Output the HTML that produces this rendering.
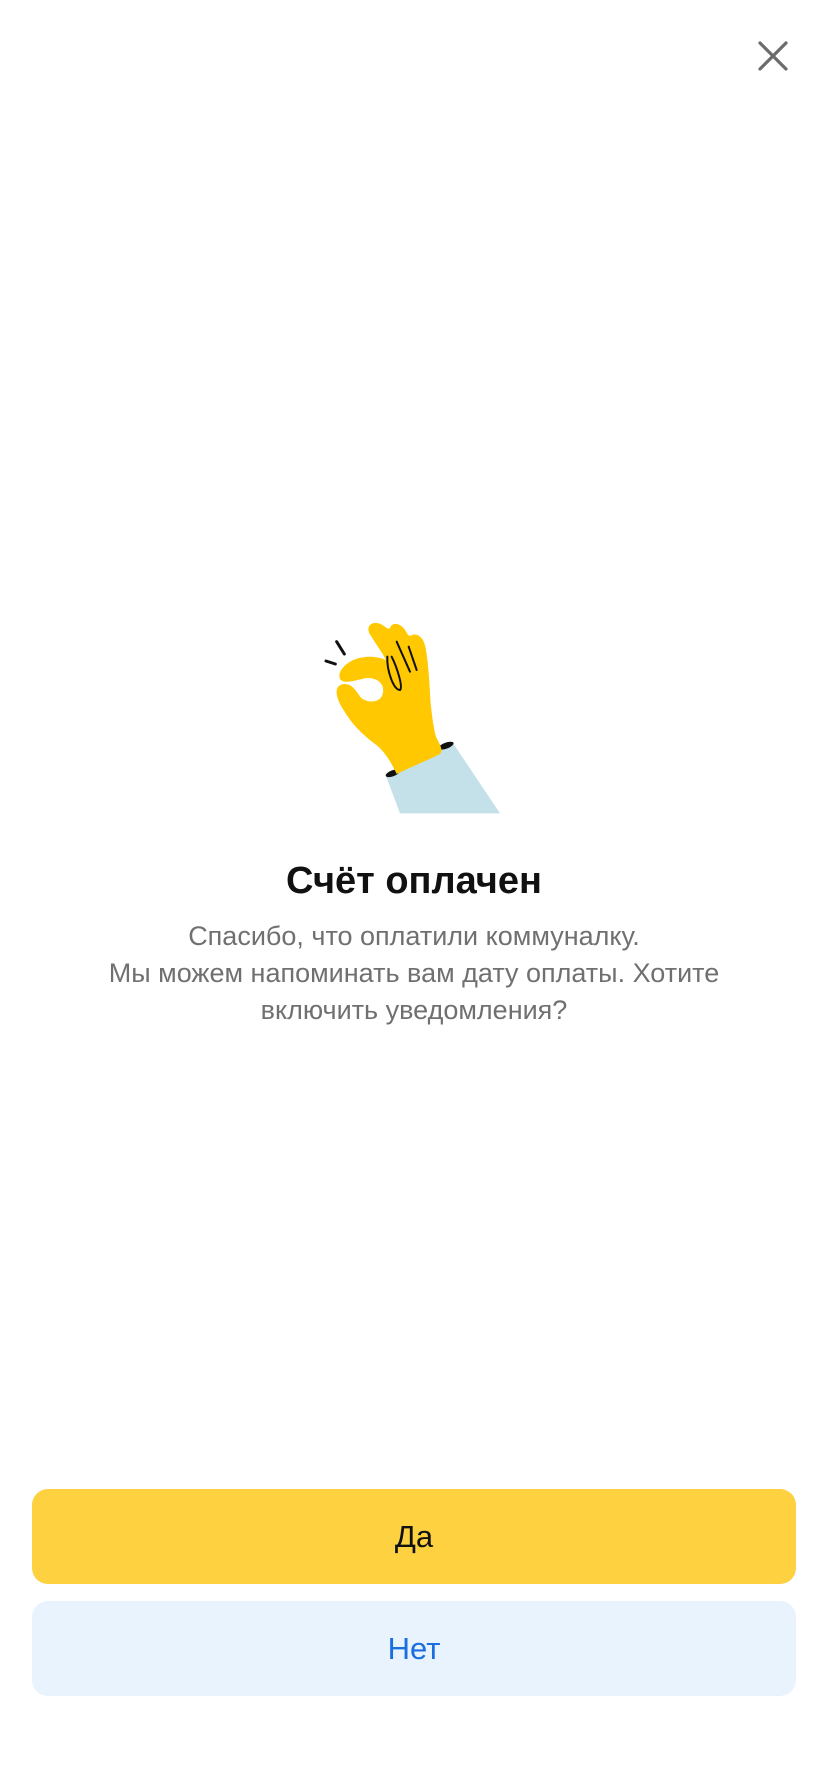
<!DOCTYPE html>
<html><head><meta charset="utf-8"><style>
body{margin:0;width:828px;height:1792px;background:#fff;font-family:"Liberation Sans","Noto Sans CJK SC",sans-serif;position:relative;overflow:hidden}
.t{position:absolute;left:0;width:828px;text-align:center}
.btn{position:absolute;left:32px;width:764px;height:95px;border-radius:16px;display:flex;align-items:center;justify-content:center;font-size:31px}
</style></head><body>
<svg style="position:absolute;left:756px;top:39px" width="34" height="34" viewBox="0 0 34 34"><path d="M4 4L30 30M30 4L4 30" stroke="#6b6b6b" stroke-width="3.2" stroke-linecap="round"/></svg>
<svg style="position:absolute;left:300px;top:600px" width="240" height="220" viewBox="0 0 720 660">
<path d="M258 528 L458 428 L600 640 L300 640 Z" fill="#c4e0e8"/>
<ellipse cx="278" cy="520" rx="22" ry="9" fill="#111" transform="rotate(-20 278 520)"/>
<ellipse cx="438" cy="437" rx="24" ry="9" fill="#111" transform="rotate(-20 438 437)"/>
<path d="M290 522 C270 480 250 450 225 432 C185 402 155 372 132 332 C105 292 100 255 132 252 C155 250 168 272 182 292 C198 308 240 312 248 282 C256 252 232 232 200 234 C170 240 138 252 122 240 C110 222 128 195 160 180 C192 166 232 168 258 180 C245 155 225 128 208 100 C196 72 225 58 252 78 C262 86 266 88 270 84 C276 64 305 68 320 98 C324 106 328 110 334 106 C350 98 370 110 376 140 C386 190 388 250 392 310 C396 350 402 390 408 410 C422 440 430 450 420 462 C380 482 330 502 290 522 Z" fill="#ffc800"/>
<path d="M110 125 L133 162 M78 183 L106 192" stroke="#111" stroke-width="9" stroke-linecap="round"/>
<path d="M262 170 C260 210 280 270 300 270 C310 260 290 200 275 170 M290 125 L330 215 M326 140 L350 210" stroke="#111" stroke-width="6" fill="none" stroke-linecap="round"/>
</svg>
<div class="t" style="top:860px;font-size:38px;font-weight:bold;color:#111">Счёт оплачен</div>
<div class="t" style="top:918px;font-size:27px;line-height:37px;color:#707070">Спасибо, что оплатили коммуналку.<br>Мы можем напоминать вам дату оплаты. Хотите<br>включить уведомления?</div>
<div class="btn" style="top:1489px;background:#fdd13f;color:#111">Да</div>
<div class="btn" style="top:1601px;background:#e9f3fd;color:#1a6fe0">Нет</div>
</body></html>
